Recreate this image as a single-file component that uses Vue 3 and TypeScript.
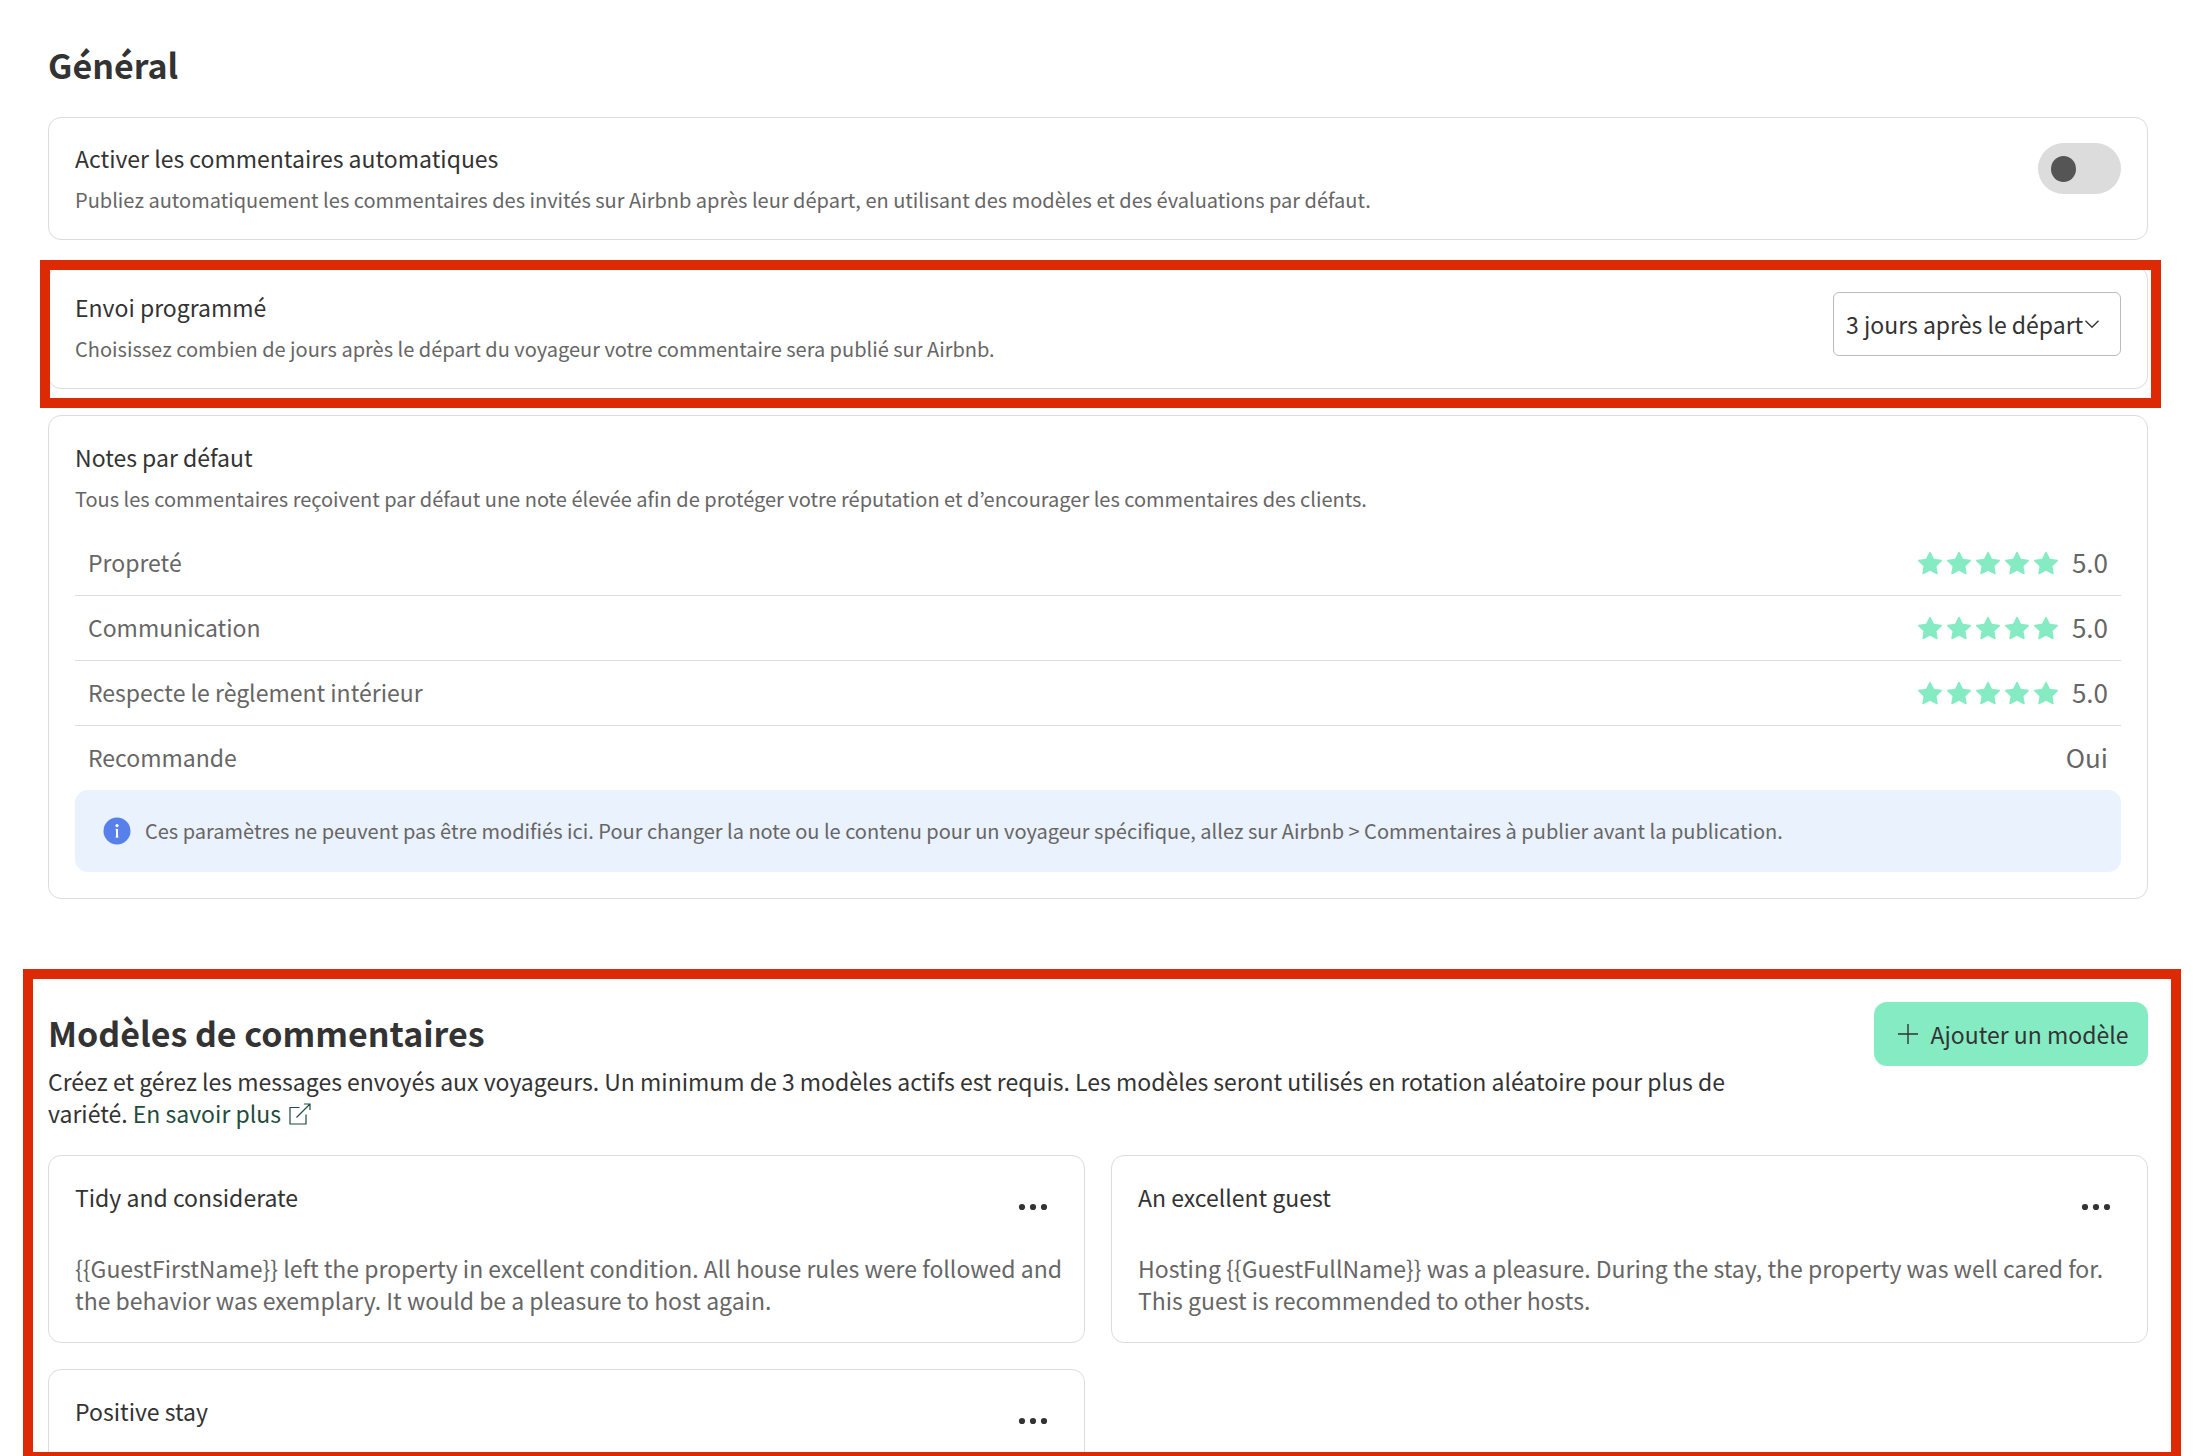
<script setup lang="ts">
import { ref } from 'vue'

interface Rating {
  label: string
  score: string
}

interface Template {
  title: string
  body: string
}

const autoReviews = ref(false)
const delay = ref('3')

const delays = [
  { value: '1', label: '1 jour après le départ' },
  { value: '3', label: '3 jours après le départ' },
  { value: '7', label: '7 jours après le départ' },
]

const ratings: Rating[] = [
  { label: 'Propreté', score: '5.0' },
  { label: 'Communication', score: '5.0' },
  { label: 'Respecte le règlement intérieur', score: '5.0' },
]

const templates: Template[] = [
  {
    title: 'Tidy and considerate',
    body: '{{GuestFirstName}} left the property in excellent condition. All house rules were followed and the behavior was exemplary. It would be a pleasure to host again.',
  },
  {
    title: 'An excellent guest',
    body: 'Hosting {{GuestFullName}} was a pleasure. During the stay, the property was well cared for. This guest is recommended to other hosts.',
  },
  {
    title: 'Positive stay',
    body: '',
  },
]
</script>

<template>
  <main class="page">
    <section class="general">
      <h1 class="heading">Général</h1>

      <div class="card setting">
        <div class="texts">
          <label class="title" for="auto">Activer les commentaires automatiques</label>
          <p class="hint">Publiez automatiquement les commentaires des invités sur Airbnb après leur départ, en utilisant des modèles et des évaluations par défaut.</p>
        </div>
        <input id="auto" v-model="autoReviews" class="switch" type="checkbox" role="switch" />
      </div>

      <div class="card setting highlighted">
        <div class="texts">
          <label class="title" for="delay">Envoi programmé</label>
          <p class="hint">Choisissez combien de jours après le départ du voyageur votre commentaire sera publié sur Airbnb.</p>
        </div>
        <div class="select">
          <select id="delay" v-model="delay">
            <option v-for="d in delays" :key="d.value" :value="d.value">{{ d.label }}</option>
          </select>
          <svg class="chevron" viewBox="0 0 14 8" aria-hidden="true"><path d="M.5 .7l6.500 6.500 6.500-6.500" /></svg>
        </div>
      </div>

      <div class="card">
        <div class="texts">
          <h2 class="title">Notes par défaut</h2>
          <p class="hint">Tous les commentaires reçoivent par défaut une note élevée afin de protéger votre réputation et d’encourager les commentaires des clients.</p>
        </div>
        <dl class="ratings">
          <div v-for="r in ratings" :key="r.label" class="row">
            <dt>{{ r.label }}</dt>
            <dd>
              <span class="stars" aria-hidden="true">
                <svg v-for="n in 5" :key="n" viewBox="0 0 16 16">
                  <path d="M3.612 15.443c-.386.198-.824-.149-.746-.592l.83-4.73L.173 6.765c-.329-.314-.158-.888.283-.95l4.898-.696L7.538.792c.197-.39.73-.39.927 0l2.184 4.327 4.898.696c.441.062.612.636.282.95l-3.522 3.356.83 4.73c.078.443-.36.79-.746.592L8 13.187l-4.389 2.256z" />
                </svg>
              </span>
              <span class="score">{{ r.score }}</span>
            </dd>
          </div>
          <div class="row">
            <dt>Recommande</dt>
            <dd><span class="score">Oui</span></dd>
          </div>
        </dl>
        <p class="notice">
          <svg class="info" viewBox="0 0 28 28" aria-hidden="true">
            <circle cx="14" cy="14" r="13.500" fill="#5780eb" />
            <circle cx="14" cy="8.600" r="1.600" fill="#fff" />
            <path d="M12 12.300h2.300v8M12 20h4.200" fill="none" stroke="#fff" stroke-opacity=".45" stroke-width="1" />
            <path d="M14 12v8.400" stroke="#fff" stroke-width="2" />
          </svg>
          <span>Ces paramètres ne peuvent pas être modifiés ici. Pour changer la note ou le contenu pour un voyageur spécifique, allez sur Airbnb &gt; Commentaires à publier avant la publication.</span>
        </p>
      </div>
    </section>

    <section class="models">
      <header class="models-head">
        <div class="intro">
          <h1 class="heading">Modèles de commentaires</h1>
          <p class="lead">
            Créez et gérez les messages envoyés aux voyageurs. Un minimum de 3 modèles actifs est requis. Les modèles seront utilisés en rotation aléatoire pour plus de variété.
            <a href="#">En savoir plus<svg class="external" viewBox="0 0 22 22" aria-hidden="true"><path d="M10.500 4.500H1v16.500h16v-9.500M7.500 14.500L21 1M15 1h6v6" /></svg></a>
          </p>
        </div>
        <button class="add" type="button">
          <svg viewBox="0 0 20 20" aria-hidden="true"><path d="M10 0v20M0 10h20" /></svg>
          Ajouter un modèle
        </button>
      </header>

      <div class="grid">
        <article v-for="t in templates" :key="t.title" class="card">
          <div class="card-head">
            <h2 class="title">{{ t.title }}</h2>
            <button class="more" type="button" aria-label="Plus d’actions">
              <svg viewBox="0 0 30 8" aria-hidden="true">
                <circle cx="4" cy="4" r="3.100" /><circle cx="15" cy="4" r="3.100" /><circle cx="26" cy="4" r="3.100" />
              </svg>
            </button>
          </div>
          <p class="body">{{ t.body }}</p>
        </article>
      </div>
    </section>
  </main>
</template>

<style>
body {
  background: #fff;
}
</style>

<style scoped>
* {
  box-sizing: border-box;
}

.page {
  display: flex;
  flex-direction: column;
  height: 100vh;
  overflow: hidden;
  font: 400 23px/32px "Noto Sans CJK KR", "Open Sans", sans-serif;
  color: #333;
}

h1, h2, p, dl, dd {
  margin: 0;
}

button, select {
  font: inherit;
  color: inherit;
}

.general {
  display: flex;
  flex-direction: column;
  flex: none;
  gap: 26px;
  padding: 34px 54px 0 48px;
}

.heading {
  font-size: 34px;
  line-height: 62px;
  font-weight: 700;
}

.general .heading {
  margin-bottom: -5px;
}

.card {
  border: 1px solid #dcdcdc;
  border-radius: 13px;
  padding: 26px;
  background: #fff;
}

.setting {
  position: relative;
  display: flex;
  justify-content: space-between;
  align-items: flex-start;
  min-height: 123px;
  padding-top: 25px;
  padding-bottom: 24px;
}

.highlighted::after {
  content: "";
  position: absolute;
  inset: -7px -14px -20px -9px;
  border: 10px solid #dd2a04;
  pointer-events: none;
}

.texts {
  display: flex;
  flex-direction: column;
  gap: 12px;
}

.title {
  font-size: 23px;
  line-height: 30px;
  font-weight: 400;
}

.hint {
  font-size: 20px;
  line-height: 30px;
  color: #666;
}

.switch {
  appearance: none;
  flex: none;
  display: flex;
  align-items: center;
  width: 83px;
  height: 51px;
  margin: 0;
  padding: 0 13px;
  border-radius: 26px;
  background: #dcdcdc;
}

.switch::before {
  content: "";
  width: 25px;
  height: 26px;
  border-radius: 50%;
  background: #555;
}

.switch:checked {
  justify-content: flex-end;
  background: #85ebc3;
}

.select {
  display: grid;
  flex: none;
  align-items: center;
}

.select select {
  grid-area: 1 / 1;
  appearance: none;
  width: 288px;
  height: 64px;
  padding: 0 12px;
  border: 1px solid #bbb;
  border-radius: 6px;
  background: #fff;
}

.chevron {
  grid-area: 1 / 1;
  justify-self: end;
  width: 14px;
  height: 8px;
  margin-right: 22px;
  fill: none;
  stroke: #333;
  stroke-width: 1.4;
  pointer-events: none;
}

.ratings {
  margin-top: 17px;
  color: #666;
}

.row {
  display: flex;
  justify-content: space-between;
  align-items: center;
  height: 65px;
  padding: 0 13px;
  border-bottom: 1px solid #dcdcdc;
}

.row:last-child {
  height: 64px;
  border-bottom: 0;
}

.row dt,
.score {
  padding-bottom: 2px;
}

.row dd {
  display: flex;
  align-items: center;
  gap: 14px;
  font-size: 26px;
}

.stars {
  display: flex;
  gap: 5px;
}

.stars svg {
  width: 24px;
  height: 24px;
  fill: #85ebc3;
}

.notice {
  display: flex;
  align-items: center;
  gap: 14px;
  min-height: 82px;
  padding: 0 28px;
  border-radius: 13px;
  background: #eaf2fe;
  font-size: 20px;
  line-height: 28px;
  color: #666;
}

.info {
  flex: none;
  width: 28px;
  height: 28px;
}

.models {
  flex: 1;
  min-height: 0;
  overflow: hidden;
  margin: 70px 21px -6px 23px;
  padding: 23px 23px 0 15px;
  border: 10px solid #dd2a04;
}

.models-head {
  display: flex;
  justify-content: space-between;
  align-items: flex-start;
}

.intro {
  flex: 0 1 81%;
}

.lead {
  margin-top: 1px;
}

.lead a {
  color: #1f4d3d;
  text-decoration: none;
  white-space: nowrap;
}

.external {
  width: 22px;
  height: 22px;
  margin-left: 8px;
  vertical-align: -2px;
  fill: none;
  stroke: currentColor;
  stroke-width: 1.2;
}

.add {
  display: flex;
  align-items: center;
  justify-content: center;
  flex: none;
  gap: 12px;
  width: 274px;
  height: 64px;
  padding: 0;
  padding-left: 5px;
  border: 0;
  border-radius: 13px;
  background: #85ebc3;
}

.add svg {
  width: 20px;
  height: 20px;
  fill: none;
  stroke: #333;
  stroke-width: 1.4;
}

.grid {
  display: grid;
  grid-template-columns: 1fr 1fr;
  gap: 26px;
  margin-top: 26px;
}

.card-head {
  display: flex;
  justify-content: space-between;
  align-items: flex-start;
}

.more {
  display: flex;
  align-items: center;
  justify-content: center;
  width: 51px;
  height: 49px;
  padding: 0;
  border: 0;
  background: none;
}

.more svg {
  width: 30px;
  height: 8px;
  fill: #333;
}

.body {
  min-height: 64px;
  margin-top: 21px;
  margin-right: -10px;
  color: #666;
}
</style>
